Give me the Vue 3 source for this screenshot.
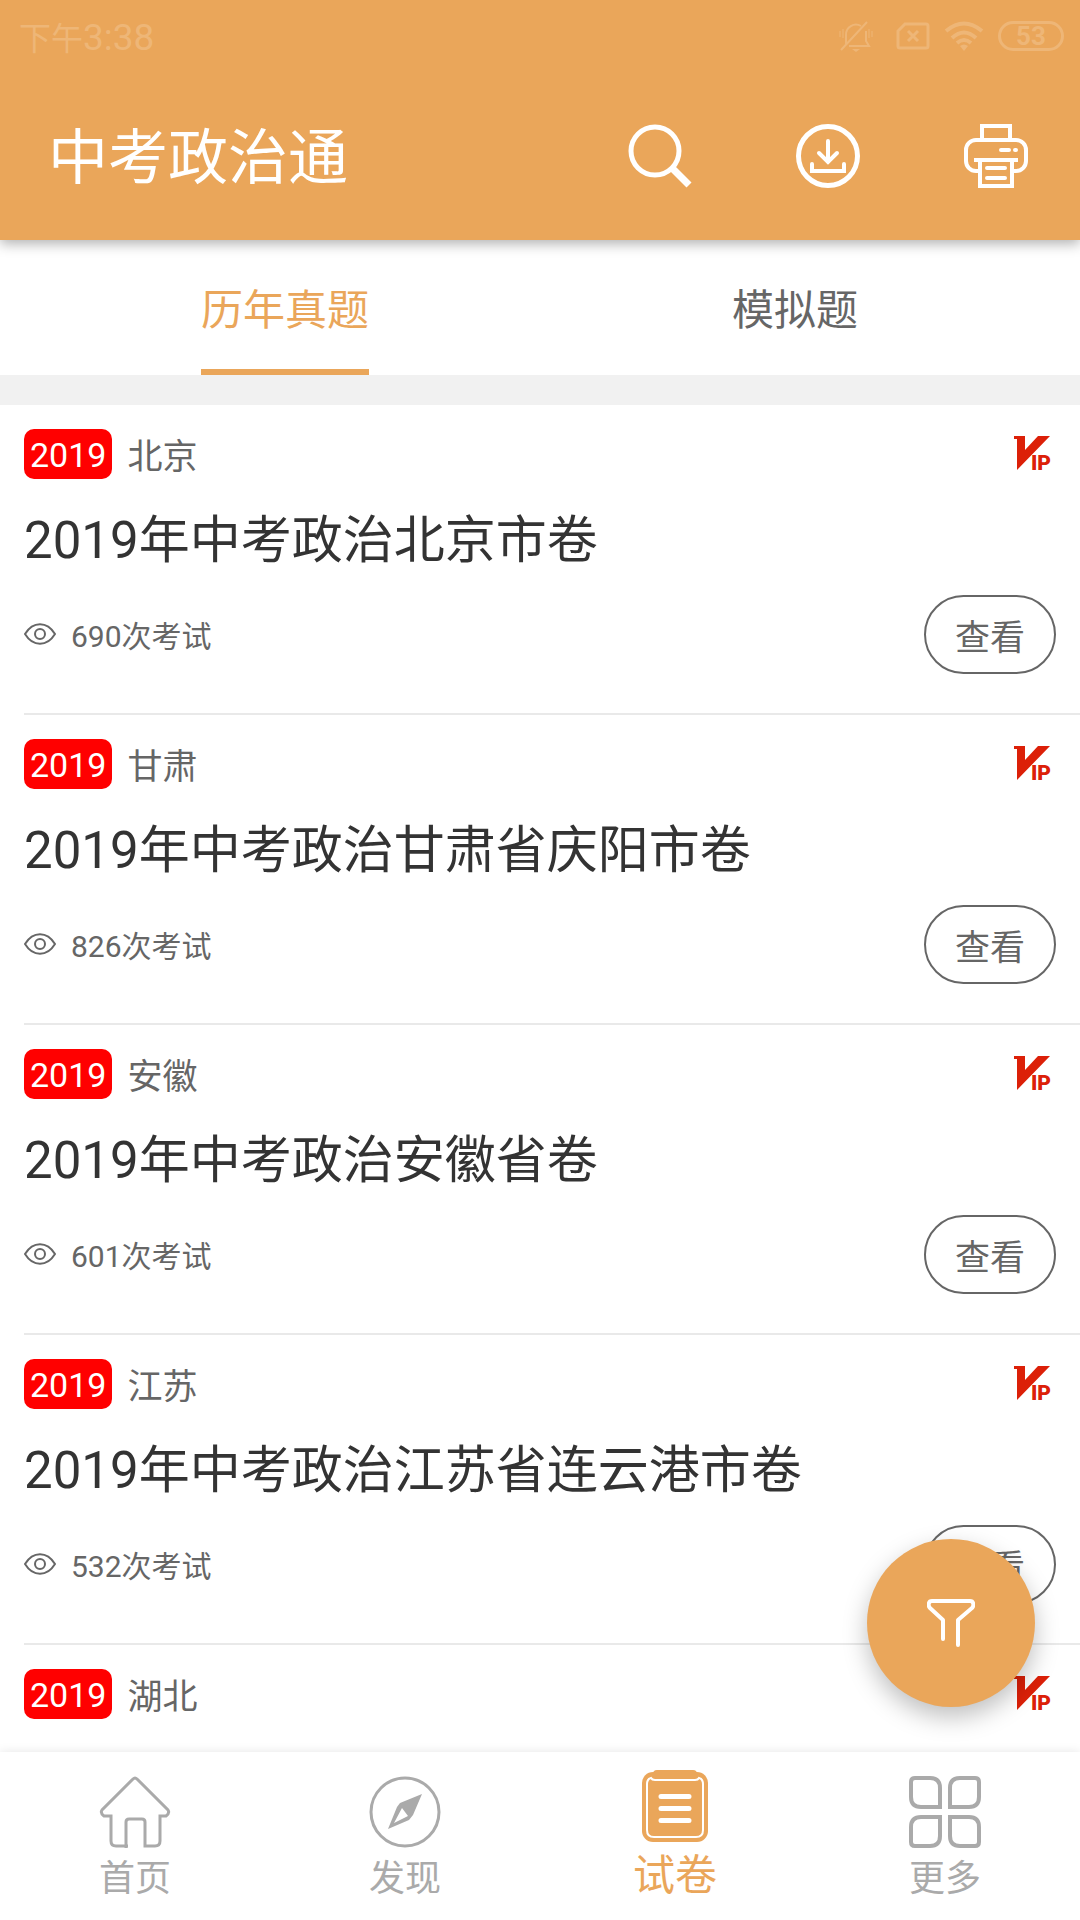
<script setup>
import { ref } from 'vue'

const tabs = ['历年真题', '模拟题']
const activeTab = ref(0)

const papers = [
  { year: 2019, region: '北京', title: '2019年中考政治北京市卷', count: 690 },
  { year: 2019, region: '甘肃', title: '2019年中考政治甘肃省庆阳市卷', count: 826 },
  { year: 2019, region: '安徽', title: '2019年中考政治安徽省卷', count: 601 },
  { year: 2019, region: '江苏', title: '2019年中考政治江苏省连云港市卷', count: 532 },
  { year: 2019, region: '湖北' },
]
</script>

<template>
  <div class="app">
    <header class="header">
      <div class="status">
        <span class="time"><span class="period">下午</span>3:38</span>
        <div class="status-icons">
          <svg class="bell" viewBox="0 0 34 32" fill="none" stroke="currentColor" stroke-width="2">
            <path d="M7 24V15a10 10 0 0 1 15-9M27 11v10l3 5H10M2 30 28 2" />
            <path d="M1 11v6M4 9v9M30 9v9M33 11v6" stroke-width="1" />
            <path d="M13 29h8l-4 3z" fill="currentColor" stroke="none" />
          </svg>
          <svg class="sim" viewBox="0 0 34 28" fill="none" stroke="currentColor" stroke-width="3">
            <path d="M9 2h21a2 2 0 0 1 2 2v20a2 2 0 0 1-2 2H4a2 2 0 0 1-2-2V9z" />
            <path d="m12 9 10 10M22 9 12 19" />
          </svg>
          <svg class="wifi" viewBox="0 0 40 30" fill="none" stroke="currentColor" stroke-width="4">
            <path d="M2 10q18-15 36 0M8 17q12-11 24 0M13 22q7-6 14 0" />
            <path d="M16 25q4-3 8 0l-4 5z" fill="currentColor" stroke="none" />
          </svg>
          <span class="battery">53</span>
        </div>
      </div>
      <div class="toolbar">
        <h1>中考政治通</h1>
        <div class="tools">
          <button type="button" aria-label="搜索">
            <svg viewBox="0 0 64 64" fill="none" stroke="currentColor">
              <circle cx="27" cy="27" r="24" stroke-width="5" />
              <path d="m43 43 18 18" stroke-width="7" />
            </svg>
          </button>
          <button type="button" aria-label="下载">
            <svg viewBox="0 0 64 64" fill="none" stroke="currentColor" stroke-width="4" stroke-linecap="round">
              <circle cx="32" cy="32" r="29.500" stroke-width="5" />
              <path d="M32 17v21M23 29l9 9 9-9M16 40v7h32v-7" />
            </svg>
          </button>
          <button type="button" aria-label="打印">
            <svg viewBox="0 0 64 64" fill="none" stroke="currentColor" stroke-width="4">
              <path d="M18 16V2h28v14M16 47h-4a10 10 0 0 1-10-10V26a10 10 0 0 1 10-10h40a10 10 0 0 1 10 10v11a10 10 0 0 1-10 10h-4" />
              <path d="M10 36h44M16 36v26h32V36" />
              <path d="M23 44h18M23 54h18M37 26h8M51 26h1" stroke-linecap="round" />
            </svg>
          </button>
        </div>
      </div>
    </header>

    <nav class="tabs">
      <button
        v-for="(tab, i) in tabs"
        :key="tab"
        type="button"
        class="tab"
        :class="{ active: activeTab === i }"
        @click="activeTab = i"
      >
        <span>{{ tab }}</span>
      </button>
    </nav>

    <main class="content">
      <ul class="list">
        <li v-for="paper in papers" :key="paper.region" class="paper">
          <div class="meta">
            <span class="year">{{ paper.year }}</span>
            <span class="region">{{ paper.region }}</span>
            <svg class="vip" viewBox="0 0 36 36" fill="#dc2008" role="img" aria-label="VIP">
              <path d="M0 0h11v14L24 0h12L3 34V3H0z" />
              <text x="17" y="34">IP</text>
            </svg>
          </div>
          <template v-if="paper.title">
            <h2>{{ paper.title }}</h2>
            <div class="foot">
              <div class="stat">
                <svg class="eye" viewBox="0 0 32 22" fill="none" stroke="currentColor" stroke-width="2">
                  <path d="M1 11C9-2 23-2 31 11 23 24 9 24 1 11z" />
                  <circle cx="16" cy="11" r="5" />
                </svg>
                <span class="count">{{ paper.count }}次考试</span>
              </div>
              <button type="button" class="view">查看</button>
            </div>
          </template>
        </li>
      </ul>
      <button type="button" class="fab" aria-label="筛选">
        <svg viewBox="0 0 48 48" fill="none" stroke="currentColor" stroke-width="4" stroke-linecap="round" stroke-linejoin="round">
          <path d="M16 40V21L3 9C1 7 1 2 5 2h38c4 0 4 5 2 7L31 21v25" />
        </svg>
      </button>
    </main>

    <nav class="bottom">
      <a href="#home">
        <svg viewBox="0 0 72 72" fill="none" stroke="currentColor" stroke-width="3">
          <path d="M29 70H17q-5 0-5-5V40H5q-4-3-2-6L34 3q2-2 4 0l31 31q2 3-2 6h-6v25q0 5-5 5H46V46q0-3-3-3H30q-3 0-3 3v26" />
        </svg>
        <span>首页</span>
      </a>
      <a href="#discover">
        <svg viewBox="0 0 72 72" fill="none" stroke="currentColor" stroke-width="3">
          <circle cx="36" cy="36" r="34" />
          <path fill="currentColor" fill-rule="evenodd" stroke="none" d="M53 18 31 27 28 31 19 53 40 44 44 39zM33 32l6 8-14 7z" />
        </svg>
        <span>发现</span>
      </a>
      <a href="#papers" class="current">
        <svg viewBox="0 0 72 72" fill="none">
          <rect x="3" y="2" width="66" height="70" rx="11" fill="currentColor" />
          <rect x="14" y="0" width="44" height="9" rx="4" fill="currentColor" />
          <path d="M12 8q-4 1-4 6v46q0 7 7 7h42q7 0 7-7V14q0-5-4-6-1 2-4 2H16q-3 0-4-2z" stroke="#fff" stroke-width="2" />
          <path d="M22 26.500h28M22 38.500h28M22 50.500h28" stroke="#fff" stroke-width="5" stroke-linecap="round" />
        </svg>
        <span>试卷</span>
      </a>
      <a href="#more">
        <svg viewBox="0 0 72 72" fill="none" stroke="currentColor" stroke-width="4">
          <path d="M6 2h15q10 0 10 10v19H12Q2 31 2 21V6q0-4 4-4zM66 2H51Q41 2 41 12v19h19q10 0 10-10V6q0-4-4-4zM6 70h15q10 0 10-10V41H12Q2 41 2 51v15q0 4 4 4zM66 70H51q-10 0-10-10V41h19q10 0 10 10v15q0 4-4 4z" />
        </svg>
        <span>更多</span>
      </a>
    </nav>
  </div>
</template>

<style>
body {
  background: #fff;
}
</style>

<style scoped>
.app {
  --accent: #eaa65a;
  --gray: #666;
  display: flex;
  flex-direction: column;
  height: 100vh;
  background: #fff;
  color: var(--gray);
  font-family: Roboto, "Noto Sans CJK SC", sans-serif;
}
button {
  margin: 0;
  padding: 0;
  border: 0;
  background: none;
  color: inherit;
  font: inherit;
}
svg {
  display: block;
}
h1,
h2 {
  margin: 0;
  font-weight: 400;
}

.header {
  position: relative;
  z-index: 2;
  flex: none;
  background: var(--accent);
  color: #fff;
  box-shadow: 0 4px 12px rgba(0, 0, 0, 0.3);
}
.status {
  display: flex;
  align-items: center;
  justify-content: space-between;
  height: 72px;
  padding: 0 16px 0 19px;
  color: #eeb677;
}
.time {
  padding-top: 4px;
  font-size: 37px;
  line-height: 40px;
}
.period {
  font-size: 32px;
}
.status-icons {
  display: flex;
  align-items: center;
}
.bell {
  width: 34px;
  height: 32px;
  margin-right: 23px;
}
.sim {
  width: 34px;
  height: 28px;
  margin-right: 14px;
}
.wifi {
  width: 40px;
  height: 30px;
  margin-right: 14px;
}
.battery {
  box-sizing: border-box;
  width: 66px;
  height: 30px;
  border: 3px solid currentColor;
  border-radius: 15px;
  font-size: 26px;
  font-weight: 700;
  line-height: 24px;
  text-align: center;
}
.toolbar {
  display: flex;
  align-items: center;
  justify-content: space-between;
  height: 168px;
  padding: 0 52px 0 48px;
}
.toolbar h1 {
  padding-top: 6px;
  font-size: 60px;
  line-height: 72px;
}
.tools {
  display: flex;
  gap: 104px;
}
.tools svg {
  width: 64px;
  height: 64px;
}

.tabs {
  display: flex;
  flex: none;
  height: 135px;
  padding: 0 30px;
  border-bottom: 30px solid #f1f1f1;
}
.tab {
  display: flex;
  flex: 1;
  justify-content: center;
  font-size: 42px;
}
.tab span {
  box-sizing: border-box;
  height: 135px;
  line-height: 142px;
}
.tab.active span {
  border-bottom: 6px solid var(--accent);
  color: var(--accent);
}

.content {
  position: relative;
  flex: 1;
  min-height: 0;
}
.list {
  height: 100%;
  margin: 0;
  padding: 0;
  overflow: hidden;
  list-style: none;
}
.paper {
  margin-left: 24px;
  padding: 24px 24px 39px 0;
  border-bottom: 2px solid #e9e9e9;
}
.paper:last-child {
  border-bottom: 0;
}
.meta {
  display: flex;
  align-items: center;
  height: 50px;
  padding-right: 6px;
}
.year {
  padding: 2px 6px 0;
  border-radius: 10px;
  background: #f00;
  color: #fff;
  font-size: 34px;
  line-height: 48px;
}
.region {
  padding-top: 8px;
  margin-left: 15px;
  font-size: 35px;
  line-height: 48px;
}
.vip {
  width: 36px;
  height: 36px;
  margin-left: auto;
  overflow: visible;
}
.vip text {
  font-size: 21px;
  font-weight: 900;
}
.paper h2 {
  margin: 32px 0 24px;
  color: #333;
  font-size: 51px;
  line-height: 60px;
}
.foot {
  display: flex;
  align-items: center;
  justify-content: space-between;
}
.stat {
  display: flex;
  align-items: center;
  padding-bottom: 2px;
}
.eye {
  width: 32px;
  height: 22px;
}
.count {
  margin-left: 15px;
  font-size: 30px;
}
.view {
  box-sizing: border-box;
  width: 132px;
  height: 79px;
  border: 2px solid var(--gray);
  border-radius: 40px;
  font-size: 35px;
}
.fab {
  position: absolute;
  right: 45px;
  bottom: 45px;
  display: flex;
  align-items: center;
  justify-content: center;
  width: 168px;
  height: 168px;
  border-radius: 50%;
  background: var(--accent);
  color: #fff;
  box-shadow: 0 10px 24px rgba(0, 0, 0, 0.25);
}
.fab svg {
  width: 48px;
  height: 48px;
}

.bottom {
  position: relative;
  display: flex;
  flex: none;
  height: 168px;
  background: #fff;
  box-shadow: 0 0 10px rgba(0, 0, 0, 0.1);
}
.bottom a {
  display: flex;
  flex: 1;
  flex-direction: column;
  align-items: center;
  padding-top: 24px;
  color: #aaa;
  font-size: 36px;
  line-height: 62px;
  text-decoration: none;
}
.bottom svg {
  width: 72px;
  height: 72px;
}
.bottom .current {
  padding-top: 18px;
  color: var(--accent);
  font-size: 42px;
  line-height: 68px;
}
</style>
